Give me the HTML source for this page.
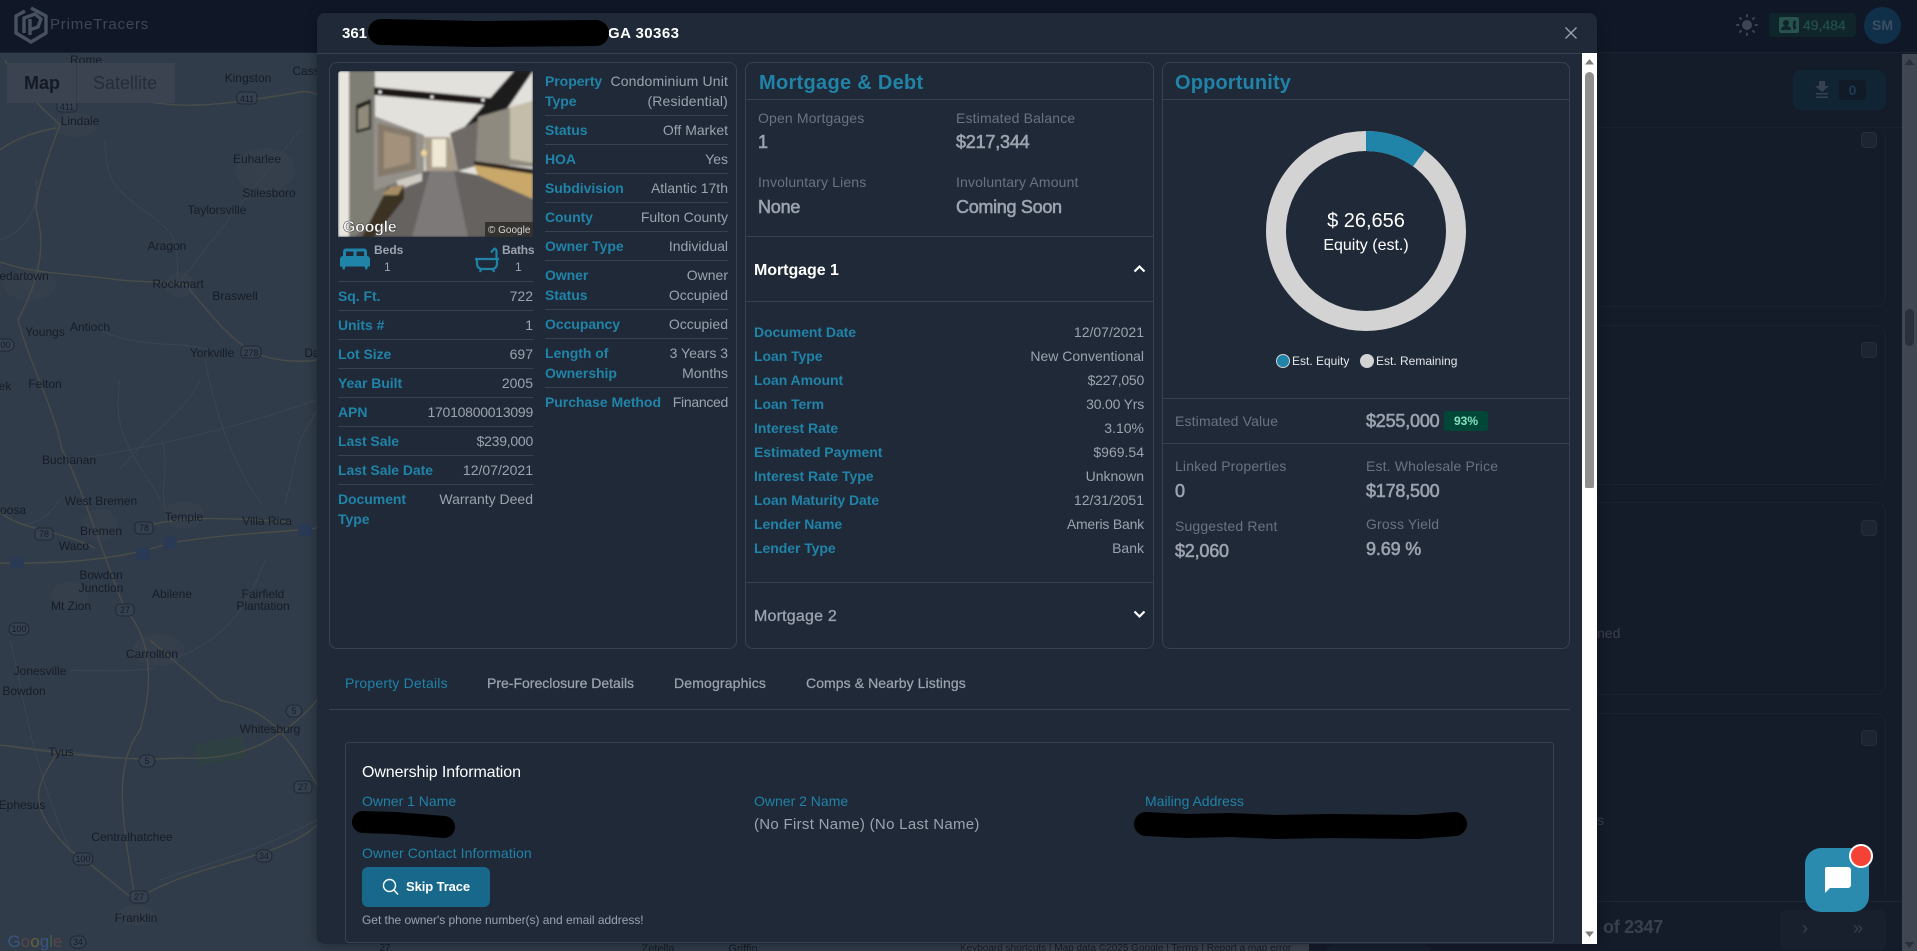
<!DOCTYPE html>
<html lang="en">
<head>
<meta charset="utf-8">
<title>PrimeTracers</title>
<style>
html,body{margin:0;padding:0;width:1917px;height:951px;overflow:hidden;background:#141b29;font-family:"Liberation Sans",Arial,sans-serif}
*{box-sizing:border-box}
.a{position:absolute}
#map{position:absolute;left:0;top:0;width:1309px;height:951px;display:block}
#map text{font:12px "Liberation Sans",Arial,sans-serif;fill:#161c27;text-anchor:middle}
#nav{position:absolute;left:0;top:0;width:1917px;height:53px;background:#101828;border-bottom:1px solid #1b2332}
#right{position:absolute;left:1309px;top:54px;width:593px;height:897px;background:#141b29}
.pc{position:absolute;left:1597px;width:289px;border:1px solid #1a2230;border-left:0;border-radius:0 10px 10px 0}
.cb{position:absolute;left:1861px;width:16px;height:16px;background:#1e2532;border:1px solid #262d3a;border-radius:4px}
#modal{position:absolute;left:317px;top:13px;width:1280px;height:931px;background:#1f2937;border-radius:8px 8px 0 8px;box-shadow:0 0 12px rgba(0,0,0,.35)}
.card{position:absolute;border:1px solid #374151;border-radius:8px;top:49px;height:587px}
.hr{position:absolute;height:1px;background:#374151}
.r{position:absolute;display:flex;justify-content:space-between;font-size:14px;line-height:20px;color:#9ca3af}
.r b{color:#2083a8;font-weight:700;white-space:nowrap;letter-spacing:-.05px}
.r span{text-align:right;white-space:nowrap}
.n{letter-spacing:-.25px}
.t{position:absolute;white-space:nowrap;line-height:20px}
.ttl{font-size:20px;font-weight:700;color:#2083a8;line-height:24px;letter-spacing:.3px}
.lb{font-size:14px;color:#6b7280;letter-spacing:.15px}
.val{font-size:18px;color:#9ca3af;font-weight:400;-webkit-text-stroke:.6px #9ca3af;letter-spacing:-.2px;line-height:24px}
.tab{font-size:14px;color:#9ca3af;-webkit-text-stroke:.25px #9ca3af;letter-spacing:.05px}
.own{font-size:14px;color:#2083a8}
</style>
</head>
<body>

<svg id="map" viewBox="0 0 1309 951">
<rect width="1309" height="951" fill="#303c49"/>
<g fill="#353f4c">
<ellipse cx="30" cy="285" rx="26" ry="16"/><ellipse cx="75" cy="125" rx="22" ry="12"/><ellipse cx="265" cy="170" rx="30" ry="22"/><ellipse cx="180" cy="285" rx="16" ry="12"/>
<ellipse cx="184" cy="515" rx="20" ry="14"/><ellipse cx="100" cy="525" rx="18" ry="16"/><ellipse cx="70" cy="595" rx="18" ry="14"/><ellipse cx="158" cy="650" rx="26" ry="16"/><ellipse cx="136" cy="915" rx="20" ry="10"/>
</g>
<rect x="195" y="740" width="50" height="22" fill="#2f4043" transform="rotate(-10 220 750)"/>
<g fill="none" stroke="#3b4553" stroke-width="1">
<path d="M105 140C105 180 115 190 150 215S175 250 178 284"/>
<path d="M178 284L240 205 300 130"/>
<path d="M205 360C215 410 230 460 262 505"/>
<path d="M70 460C140 450 230 430 317 400"/>
<path d="M285 505L300 440 317 410"/>
<path d="M162 440C170 470 160 480 165 510"/>
<path d="M0 240C30 230 40 200 36 180"/>
<path d="M100 330C140 350 180 340 210 350"/>
<path d="M120 380C110 440 140 460 160 500"/>
<path d="M60 500C30 540 10 520 0 510"/>
<path d="M70 670C130 672 140 670 155 668"/>
<path d="M10 640C25 700 30 760 70 850"/>
<path d="M170 660C230 640 250 600 265 560"/>
<path d="M0 745C60 750 90 755 117 758"/>
<path d="M160 880C220 860 260 850 317 820"/>
<path d="M200 380C180 420 150 430 120 470"/>
</g>
<g fill="none" stroke="#4a4c49" stroke-width="1.4">
<path d="M5 60C20 90 50 115 60 125 50 150 36 190 36 210 48 250 36 285 18 320 30 365 55 410 62 450 75 470 100 545 125 610 150 635 155 680 140 730 110 770 125 830 135 900 120 951"/>
<path d="M0 150C20 135 45 130 56 128"/>
<path d="M120 95C170 110 210 108 300 92 310 90 317 95 317 95"/>
<path d="M0 262C40 275 60 272 120 280 170 284 190 280 190 290 215 320 235 345 260 355 290 365 317 360 317 360"/>
<path d="M0 563C60 564 120 560 170 543 230 533 290 532 317 528"/>
<path d="M0 512C20 530 60 530 95 548M144 528C170 515 230 518 290 522"/>
<path d="M150 640L220 700C260 710 280 720 317 785"/>
<path d="M0 745C50 752 120 762 180 758 220 760 270 755 317 700"/>
<path d="M135 900C200 860 280 860 317 825"/>
<path d="M60 750C30 790 30 810 70 850 100 870 120 890 135 900"/>
</g>
<g>
<text x="86" y="64">Rome</text><text x="248" y="82">Kingston</text><text x="306" y="75">Cass</text><text x="80" y="125">Lindale</text>
<text x="257" y="163">Euharlee</text><text x="269" y="197">Stilesboro</text><text x="217" y="214">Taylorsville</text><text x="167" y="250">Aragon</text>
<text x="24" y="280">edartown</text><text x="178" y="288">Rockmart</text><text x="235" y="300">Braswell</text><text x="45" y="336">Youngs</text>
<text x="90" y="331">Antioch</text><text x="212" y="357">Yorkville</text><text x="312" y="357">Da</text><text x="5" y="390">ek</text><text x="45" y="388">Felton</text>
<text x="69" y="464">Buchanan</text><text x="101" y="505">West Bremen</text><text x="13" y="514">oosa</text><text x="184" y="521">Temple</text><text x="267" y="525">Villa Rica</text>
<text x="101" y="535">Bremen</text><text x="74" y="550">Waco</text><text x="101" y="579">Bowdon</text><text x="101" y="592">Junction</text><text x="172" y="598">Abilene</text>
<text x="263" y="598">Fairfield</text><text x="263" y="610">Plantation</text><text x="71" y="610">Mt Zion</text><text x="152" y="658">Carrollton</text><text x="40" y="675">Jonesville</text>
<text x="24" y="695">Bowdon</text><text x="270" y="733">Whitesburg</text><text x="61" y="756">Tyus</text><text x="22" y="809">Ephesus</text><text x="132" y="841">Centralhatchee</text><text x="136" y="922">Franklin</text>
</g>
<g fill="#364150" stroke="#1f2733" stroke-width="1" font-size="9">
<rect x="237" y="92" width="20" height="12" rx="4"/><rect x="57" y="100" width="20" height="12" rx="4"/><rect x="35" y="528" width="18" height="12" rx="4"/><rect x="135" y="522" width="18" height="12" rx="4"/>
<rect x="116" y="604" width="18" height="12" rx="4"/><rect x="241" y="346" width="20" height="12" rx="4"/><rect x="-8" y="339" width="22" height="12" rx="6"/><rect x="9" y="623" width="20" height="12" rx="6"/>
<rect x="286" y="705" width="16" height="12" rx="6"/><rect x="139" y="755" width="16" height="12" rx="6"/><rect x="294" y="781" width="18" height="12" rx="4"/><rect x="73" y="853" width="20" height="12" rx="6"/>
<rect x="256" y="850" width="16" height="12" rx="6"/><rect x="130" y="891" width="18" height="12" rx="4"/><rect x="70" y="936" width="16" height="12" rx="6"/>
</g>
<g style="font-size:9px">
<text x="247" y="102" style="font-size:9px">411</text><text x="67" y="110" style="font-size:9px">411</text><text x="44" y="537" style="font-size:9px">78</text><text x="144" y="531" style="font-size:9px">78</text>
<text x="125" y="613" style="font-size:9px">27</text><text x="251" y="356" style="font-size:9px">278</text><text x="3" y="348" style="font-size:9px">100</text><text x="19" y="632" style="font-size:9px">100</text>
<text x="294" y="714" style="font-size:9px">5</text><text x="147" y="764" style="font-size:9px">5</text><text x="303" y="790" style="font-size:9px">27</text><text x="83" y="862" style="font-size:9px">100</text>
<text x="264" y="859" style="font-size:9px">34</text><text x="139" y="900" style="font-size:9px">27</text><text x="78" y="945" style="font-size:9px">34</text>
</g>
<g>
<rect x="10" y="557" width="14" height="12" rx="3" fill="#2a3a55"/><rect x="136" y="548" width="14" height="12" rx="3" fill="#2a3a55"/><rect x="163" y="537" width="14" height="12" rx="3" fill="#2a3a55"/><rect x="298" y="524" width="14" height="12" rx="3" fill="#2a3a55"/>
</g>
<text x="35" y="947" style="font-size:17px"><tspan style="fill:#3a5680">G</tspan><tspan style="fill:#5c4448">o</tspan><tspan style="fill:#6a6040">o</tspan><tspan style="fill:#3a5680">g</tspan><tspan style="fill:#3f6048">l</tspan><tspan style="fill:#5c4448">e</tspan></text>
<text x="385" y="951" style="font-size:10px">27</text>
<text x="658" y="952" style="font-size:11px">Zetella</text>
<text x="743" y="952" style="font-size:11px">Griffin</text>
<rect x="960" y="944" width="349" height="7" fill="#3a424f"/>
<text x="960" y="951" style="font-size:10px;text-anchor:start">Keyboard shortcuts    |    Map data ©2025 Google    |    Terms    |    Report a map error</text>
</svg>

<div id="nav">
  <svg class="a" style="left:13px;top:6px" width="36" height="38" viewBox="0 0 36 38" fill="none" stroke="#485160" stroke-width="3.400" stroke-linejoin="round">
    <path d="M18 2 33 10V27L18 36 3 27V10L12 5"/>
    <path d="M11 27V12L22 8 28 13 25 21 16 24"/>
    <path d="M17 13V29"/>
  </svg>
  <div class="t" style="left:50px;top:15px;font-size:15px;color:#3f4754;letter-spacing:.8px;font-weight:400">PrimeTracers</div>

  <svg class="a" style="left:1735px;top:13px" width="24" height="24" viewBox="0 0 24 24" fill="#3d4554" stroke="#3d4554" stroke-width="2" stroke-linecap="round">
    <circle cx="12" cy="12" r="5" stroke="none"/>
    <path d="M12 2v1.500M12 20.500V22M2 12h1.500M20.500 12H22M5 5l1 1M18 18l1 1M5 19l1-1M18 6l1-1"/>
  </svg>
  <div class="a" style="left:1769px;top:13px;width:87px;height:24px;background:#0f2529;border-radius:4px"></div>
  <svg class="a" style="left:1779px;top:17px" width="20" height="16" viewBox="0 0 20 16">
    <rect width="20" height="16" rx="2" fill="#27524e"/>
    <circle cx="7" cy="6" r="3" fill="#0f2529"/><path d="M2 13c0-3 2-4 5-4s5 1 5 4z" fill="#0f2529"/>
    <path d="M15 3c-1.500 3-1.500 7 0 10l2.500-2-1-2v-2l1-2z" fill="#0f2529"/>
  </svg>
  <div class="t" style="left:1803px;top:15px;font-size:14px;color:#234c48;-webkit-text-stroke:.35px #234c48">49,484</div>
  <div class="a" style="left:1864px;top:7px;width:37px;height:37px;border-radius:50%;background:#102f49;color:#3b4d62;font-size:14px;font-weight:700;text-align:center;line-height:37px">SM</div>
</div>

<div id="right"></div>
<div class="hr" style="left:1597px;top:127px;width:305px;background:#1a2230"></div>
<div class="pc" style="top:126px;height:181px;border-top:0"></div>
<div class="pc" style="top:325px;height:160px"></div>
<div class="pc" style="top:502px;height:193px"></div>
<div class="pc" style="top:713px;height:189px;border-bottom:0"></div>
<div class="cb" style="top:132px"></div><div class="cb" style="top:342px"></div><div class="cb" style="top:520px"></div><div class="cb" style="top:730px"></div>
<div class="t" style="left:1597px;top:623px;font-size:14px;color:#3a404b">ned</div>
<div class="t" style="left:1597px;top:810px;font-size:14px;color:#3a404b">s</div>

<div class="a" style="left:1793px;top:70px;width:93px;height:40px;background:#112433;border-radius:8px"></div>
<svg class="a" style="left:1815px;top:81px" width="14" height="18" viewBox="0 0 14 18" fill="#374150"><path d="M4 0h6v5h4L7 11 0 5h4zM1 12h12v1.500H1zM1 15.500h12V17H1z"/></svg>
<div class="a" style="left:1839px;top:80px;width:27px;height:20px;background:#111a27;border-radius:3px;color:#1e3a50;font-size:14px;font-weight:700;text-align:center;line-height:20px">0</div>

<div class="hr" style="left:1597px;top:901px;width:305px;background:#1f2635"></div>
<div class="t" style="left:1603px;top:917px;font-size:18px;font-weight:700;color:#39404d;letter-spacing:-.3px">of 2347</div>
<div class="a" style="left:1780px;top:910px;width:106px;height:40px;background:#18202e;border-radius:6px"></div>
<div class="t" style="left:1802px;top:918px;font-size:18px;color:#39404d">›</div>
<div class="t" style="left:1853px;top:918px;font-size:18px;color:#39404d">»</div>
<div class="a" style="left:1327px;top:944px;width:103px;height:7px;background:#18202e;border-radius:6px 6px 0 0"></div>

<div class="a" style="left:1902px;top:54px;width:15px;height:897px;background:#414752"></div>
<div class="a" style="left:1905px;top:309px;width:9px;height:37px;background:#2a303c;border-radius:5px"></div>
<svg class="a" style="left:1904px;top:58px" width="11" height="8"><path d="M5.500 1 10.500 7H.5z" fill="#2a303c"/></svg>
<svg class="a" style="left:1904px;top:941px" width="11" height="8"><path d="M5.500 7 10.500 1H.5z" fill="#2a303c"/></svg>

<div class="a" style="left:7px;top:63px;width:168px;height:40px;background:#3b4351"></div>
<div class="a" style="left:76px;top:63px;width:1px;height:40px;background:#333a48"></div>
<div class="t" style="left:24px;top:73px;font-size:18px;font-weight:700;color:#141a25">Map</div>
<div class="t" style="left:93px;top:73px;font-size:18px;color:#262d39">Satellite</div>

<div id="modal">
  <!-- offsets: modal left=317, top=13 -->
  <div class="t" style="left:25px;top:11px;font-size:15px;font-weight:700;color:#fff">361</div>
  <div class="t" style="left:291px;top:11px;font-size:15px;font-weight:700;color:#fff;letter-spacing:.45px">GA 30363</div>
  <svg class="a" style="left:0;top:0;width:320px;height:40px;overflow:visible" viewBox="0 0 320 40"><path d="M64 19L160 21 279 20" stroke="#000" stroke-width="26" stroke-linecap="round" fill="none"/></svg>
  <svg class="a" style="left:1248px;top:14px" width="12" height="12" viewBox="0 0 12 12"><path d="M.5.5l11 11M11.500.5l-11 11" stroke="#9ca3af" stroke-width="1.300"/></svg>
  <div class="hr" style="left:0;top:40px;width:1280px"></div>

  <!-- CARD 1 -->
  <div class="card" style="left:12px;width:408px"></div>
  <svg class="a" style="left:21px;top:58px;border-radius:3px 0 0 0" width="195" height="166" viewBox="0 0 195 166">
    <defs><filter id="bl"><feGaussianBlur stdDeviation="1"/></filter></defs>
    <g filter="url(#bl)">
    <rect width="195" height="166" fill="#e3e1db"/>
    <polygon points="0,0 12,0 12,166 0,166" fill="#e9e6df"/>
    <polygon points="11,0 37,0 37,118 86,100 16,166 11,166" fill="#7f7e75"/>
    <polygon points="36,45 86,64 86,100 36,120" fill="#94908a"/>
    <polygon points="40,52 78,62 78,98 40,106" fill="#85796a"/>
    <polygon points="46,60 72,66 72,92 46,98" fill="#a3917c"/>
    <polygon points="36,16 165,28 160,35 36,24" fill="#1a1918"/>
    <polygon points="176,0 195,0 150,66 128,74 123,60" fill="#1f1c1a"/>
    <polygon points="18,34 33,28 33,58 18,62" fill="#1f1d1a"/>
    <polygon points="20,38 31,33 31,56 20,59" fill="#8f8a7a"/>
    <polygon points="86,66 112,66 120,100 88,100" fill="#a89d8a"/>
    <polygon points="94,68 108,68 108,96 94,96" fill="#efe8d4"/>
    <polygon points="112,62 140,50 138,95 120,100" fill="#6f6b66"/>
    <polygon points="140,46 195,30 195,96 138,92" fill="#8f8a80"/>
    <polygon points="172,36 195,30 195,92 172,88" fill="#c4bda9"/>
    <polygon points="136,90 195,98 195,105 136,95" fill="#2b241b"/>
    <polygon points="136,94 195,103 195,128 170,118 140,104" fill="#c9a86b"/>
    <polygon points="16,166 86,100 120,100 140,104 195,128 195,166" fill="#666260"/>
    <polygon points="92,100 116,100 130,166 74,166" fill="#7d7978"/>
    <polygon points="58,110 84,102 84,110 62,118" fill="#cfcac2"/>
    <polygon points="50,116 66,114 66,128 36,166 24,166" fill="#3a3122"/>
    <polygon points="52,116 66,114 60,124 44,124" fill="#a68d68"/>
    <circle cx="86" cy="82" r="3" fill="#f3d79a"/>
    <circle cx="42" cy="21" r="1.500" fill="#fff"/><circle cx="94" cy="26" r="1.500" fill="#fff"/><circle cx="145" cy="29" r="1.500" fill="#fff"/>
    </g>
    <rect x="147" y="151" width="48" height="15" fill="#2d2b28" opacity=".85"/>
    <text x="150" y="162" font-family="Liberation Sans" font-size="10" fill="#d5d5d5">© Google</text>
    <text x="5" y="161" font-family="Liberation Sans" font-weight="700" font-size="16" fill="#fff" stroke="#333" stroke-width=".5" letter-spacing="-.3">Google</text>
  </svg>
  <svg class="a" style="left:20px;top:227.500px" width="36" height="36" viewBox="0 0 24 24"><path fill="#2083a8" d="M20 10V7C20 5.900 19.100 5 18 5H6C4.900 5 4 5.900 4 7V10C2.900 10 2 10.900 2 12V17H3.330L4 19H5L5.670 17H18.330L19 19H20L20.670 17H22V12C22 10.900 21.100 10 20 10M11 10H6V7H11V10M18 10H13V7H18V10Z"/></svg>
  <div class="t" style="left:57px;top:227px;font-size:12px;font-weight:700;color:#9ca3af">Beds</div>
  <div class="t" style="left:67px;top:244px;font-size:12px;color:#9ca3af">1</div>
  <svg class="a" style="left:157px;top:234px" width="26" height="26" viewBox="0 0 26 26" fill="none" stroke="#2083a8" stroke-width="2.200"><path d="M1 12H25"/><path d="M3 12V17a5 5 0 0 0 5 5H18a5 5 0 0 0 5-5V12"/><path d="M7 22L6 25M19 22L20 25"/><path d="M22.500 12V4a2.500 2.500 0 0 0-2.500-2.500"/><path d="M17 5.500L20.500 1.500"/></svg>
  <div class="t" style="left:185px;top:227px;font-size:12px;font-weight:700;color:#9ca3af;letter-spacing:-.2px">Baths</div>
  <div class="t" style="left:198px;top:244px;font-size:12px;color:#9ca3af">1</div>

  <div class="hr" style="left:21px;top:268px;width:195px"></div>
  <div class="r" style="left:21px;top:273px;width:195px"><b>Sq. Ft.</b><span>722</span></div>
  <div class="hr" style="left:21px;top:297px;width:195px"></div>
  <div class="r" style="left:21px;top:302px;width:195px"><b>Units #</b><span>1</span></div>
  <div class="hr" style="left:21px;top:326px;width:195px"></div>
  <div class="r" style="left:21px;top:331px;width:195px"><b>Lot Size</b><span>697</span></div>
  <div class="hr" style="left:21px;top:355px;width:195px"></div>
  <div class="r" style="left:21px;top:360px;width:195px"><b>Year Built</b><span>2005</span></div>
  <div class="hr" style="left:21px;top:384px;width:195px"></div>
  <div class="r" style="left:21px;top:389px;width:195px"><b>APN</b><span class="n">17010800013099</span></div>
  <div class="hr" style="left:21px;top:413px;width:195px"></div>
  <div class="r" style="left:21px;top:418px;width:195px"><b>Last Sale</b><span class="n">$239,000</span></div>
  <div class="hr" style="left:21px;top:442px;width:195px"></div>
  <div class="r" style="left:21px;top:447px;width:195px"><b>Last Sale Date</b><span>12/07/2021</span></div>
  <div class="hr" style="left:21px;top:471px;width:195px"></div>
  <div class="r" style="left:21px;top:476px;width:195px"><b>Document<br>Type</b><span>Warranty Deed</span></div>

  <div class="r" style="left:228px;top:58px;width:183px"><b>Property<br>Type</b><span style="letter-spacing:.15px">Condominium Unit<br>(Residential)</span></div>
  <div class="hr" style="left:228px;top:102px;width:183px"></div>
  <div class="r" style="left:228px;top:107px;width:183px"><b>Status</b><span>Off Market</span></div>
  <div class="hr" style="left:228px;top:131px;width:183px"></div>
  <div class="r" style="left:228px;top:136px;width:183px"><b>HOA</b><span>Yes</span></div>
  <div class="hr" style="left:228px;top:160px;width:183px"></div>
  <div class="r" style="left:228px;top:165px;width:183px"><b>Subdivision</b><span>Atlantic 17th</span></div>
  <div class="hr" style="left:228px;top:189px;width:183px"></div>
  <div class="r" style="left:228px;top:194px;width:183px"><b>County</b><span>Fulton County</span></div>
  <div class="hr" style="left:228px;top:218px;width:183px"></div>
  <div class="r" style="left:228px;top:223px;width:183px"><b>Owner Type</b><span>Individual</span></div>
  <div class="hr" style="left:228px;top:247px;width:183px"></div>
  <div class="r" style="left:228px;top:252px;width:183px"><b>Owner<br>Status</b><span>Owner<br>Occupied</span></div>
  <div class="hr" style="left:228px;top:296px;width:183px"></div>
  <div class="r" style="left:228px;top:301px;width:183px"><b>Occupancy</b><span>Occupied</span></div>
  <div class="hr" style="left:228px;top:325px;width:183px"></div>
  <div class="r" style="left:228px;top:330px;width:183px"><b>Length of<br>Ownership</b><span>3 Years 3<br>Months</span></div>
  <div class="hr" style="left:228px;top:374px;width:183px"></div>
  <div class="r" style="left:228px;top:379px;width:183px"><b>Purchase Method</b><span style="letter-spacing:-.3px">Financed</span></div>

  <!-- CARD 2 -->
  <div class="card" style="left:428px;width:409px"></div>
  <div class="t ttl" style="left:442px;top:58px">Mortgage &amp; Debt</div>
  <div class="hr" style="left:428px;top:86px;width:409px"></div>
  <div class="t lb" style="left:441px;top:95px">Open Mortgages</div>
  <div class="t val" style="left:441px;top:117px">1</div>
  <div class="t lb" style="left:639px;top:95px">Estimated Balance</div>
  <div class="t val" style="left:639px;top:117px">$217,344</div>
  <div class="t lb" style="left:441px;top:159px">Involuntary Liens</div>
  <div class="t val" style="left:441px;top:182px">None</div>
  <div class="t lb" style="left:639px;top:159px">Involuntary Amount</div>
  <div class="t val" style="left:639px;top:182px;letter-spacing:-.3px">Coming Soon</div>
  <div class="hr" style="left:428px;top:223px;width:409px"></div>
  <div class="t" style="left:437px;top:248px;font-size:16px;font-weight:700;color:#fff;letter-spacing:-.05px">Mortgage 1</div>
  <svg class="a" style="left:816px;top:251px" width="13" height="9" viewBox="0 0 13 9"><path d="M1.500 7.500 6.500 2.500l5 5" fill="none" stroke="#fff" stroke-width="2.200"/></svg>
  <div class="hr" style="left:428px;top:288px;width:409px"></div>
  <div class="r" style="left:437px;top:309px;width:390px"><b>Document Date</b><span>12/07/2021</span></div>
  <div class="r" style="left:437px;top:333px;width:390px"><b>Loan Type</b><span>New Conventional</span></div>
  <div class="r" style="left:437px;top:357px;width:390px"><b>Loan Amount</b><span class="n">$227,050</span></div>
  <div class="r" style="left:437px;top:381px;width:390px"><b>Loan Term</b><span style="letter-spacing:-.2px">30.00 Yrs</span></div>
  <div class="r" style="left:437px;top:405px;width:390px"><b>Interest Rate</b><span>3.10%</span></div>
  <div class="r" style="left:437px;top:429px;width:390px"><b>Estimated Payment</b><span>$969.54</span></div>
  <div class="r" style="left:437px;top:453px;width:390px"><b>Interest Rate Type</b><span>Unknown</span></div>
  <div class="r" style="left:437px;top:477px;width:390px"><b>Loan Maturity Date</b><span>12/31/2051</span></div>
  <div class="r" style="left:437px;top:501px;width:390px"><b>Lender Name</b><span style="letter-spacing:-.2px">Ameris Bank</span></div>
  <div class="r" style="left:437px;top:525px;width:390px"><b>Lender Type</b><span>Bank</span></div>
  <div class="hr" style="left:428px;top:569px;width:409px"></div>
  <div class="t" style="left:437px;top:594px;font-size:16px;color:#9ca3af;-webkit-text-stroke:.3px #9ca3af;letter-spacing:.2px">Mortgage 2</div>
  <svg class="a" style="left:816px;top:597px" width="13" height="9" viewBox="0 0 13 9"><path d="M1.500 1.500 6.500 6.500l5-5" fill="none" stroke="#fff" stroke-width="2.200"/></svg>

  <!-- CARD 3 -->
  <div class="card" style="left:845px;width:408px"></div>
  <div class="t ttl" style="left:858px;top:58px;letter-spacing:.15px">Opportunity</div>
  <div class="hr" style="left:845px;top:86px;width:408px"></div>
  <svg class="a" style="left:949px;top:118px" width="200" height="200" viewBox="-100 -100 200 200">
    <circle r="90" fill="none" stroke="#d3d3d3" stroke-width="20"/>
    <path d="M0-100A100 100 0 0 1 59-81L47-64.500A80 80 0 0 0 0-80Z" fill="#2083a8"/>
    <text y="-4" text-anchor="middle" font-family="Liberation Sans" font-size="20" fill="#fff">$ 26,656</text>
    <text y="19" text-anchor="middle" font-family="Liberation Sans" font-size="16" fill="#fff">Equity (est.)</text>
  </svg>
  <div class="a" style="left:959px;top:341px;width:14px;height:14px;border-radius:50%;background:#2083a8;border:1px solid #d3d3d3"></div>
  <div class="t" style="left:975px;top:338px;font-size:12px;color:#e5e7eb">Est. Equity</div>
  <div class="a" style="left:1043px;top:341px;width:14px;height:14px;border-radius:50%;background:#d3d3d3"></div>
  <div class="t" style="left:1059px;top:338px;font-size:12px;color:#e5e7eb">Est. Remaining</div>
  <div class="hr" style="left:845px;top:385px;width:408px"></div>
  <div class="t lb" style="left:858px;top:398px">Estimated Value</div>
  <div class="t val" style="left:1049px;top:396px">$255,000</div>
  <div class="a" style="left:1127px;top:398px;width:44px;height:20px;background:#014737;border-radius:3px;color:#84e1bc;font-size:12px;font-weight:700;text-align:center;line-height:20px">93%</div>
  <div class="hr" style="left:845px;top:430px;width:408px"></div>
  <div class="t lb" style="left:858px;top:443px">Linked Properties</div>
  <div class="t val" style="left:858px;top:466px">0</div>
  <div class="t lb" style="left:1049px;top:443px">Est. Wholesale Price</div>
  <div class="t val" style="left:1049px;top:466px">$178,500</div>
  <div class="t lb" style="left:858px;top:503px">Suggested Rent</div>
  <div class="t val" style="left:858px;top:526px">$2,060</div>
  <div class="t lb" style="left:1049px;top:501px">Gross Yield</div>
  <div class="t val" style="left:1049px;top:524px;letter-spacing:-.15px">9.69 %</div>

  <!-- TABS -->
  <div class="t tab" style="left:28px;top:660px;color:#2083a8;-webkit-text-stroke:0;letter-spacing:.2px">Property Details</div>
  <div class="t tab" style="left:170px;top:660px;letter-spacing:0">Pre-Foreclosure Details</div>
  <div class="t tab" style="left:357px;top:660px;letter-spacing:.15px">Demographics</div>
  <div class="t tab" style="left:489px;top:660px;letter-spacing:.08px">Comps &amp; Nearby Listings</div>
  <div class="hr" style="left:12px;top:696px;width:1241px"></div>

  <!-- OWNERSHIP -->
  <div class="a" style="left:28px;top:729px;width:1209px;height:201px;border:1px solid #374151;border-radius:4px"></div>
  <div class="t" style="left:45px;top:750px;font-size:16px;color:#fff;letter-spacing:-.1px">Ownership Information</div>
  <div class="t own" style="left:45px;top:778px">Owner 1 Name</div>
  <svg class="a" style="left:30px;top:790px;overflow:visible" width="120" height="40"><path d="M16 19L48 20 97 24" stroke="#000" stroke-width="22" stroke-linecap="round" fill="none"/></svg>
  <div class="t own" style="left:437px;top:778px">Owner 2 Name</div>
  <div class="t" style="left:437px;top:802px;font-size:15px;color:#9ca3af;letter-spacing:.3px">(No First Name) (No Last Name)</div>
  <div class="t own" style="left:828px;top:778px">Mailing Address</div>
  <svg class="a" style="left:810px;top:790px;overflow:visible" width="350" height="40"><path d="M19 21L60 23 103 22 150 24 203 23 290 24 328 21" stroke="#000" stroke-width="24" stroke-linecap="round" stroke-linejoin="round" fill="none"/></svg>
  <div class="t own" style="left:45px;top:830px;letter-spacing:.1px">Owner Contact Information</div>
  <div class="a" style="left:45px;top:854px;width:128px;height:40px;background:#17688b;border-radius:6px"></div>
  <svg class="a" style="left:65px;top:865px" width="17" height="18" viewBox="0 0 17 18" fill="none" stroke="#fff" stroke-width="1.400"><circle cx="7.500" cy="7.500" r="6"/><path d="M12 12l4 4.500"/></svg>
  <div class="t" style="left:89px;top:864px;font-size:13px;font-weight:700;color:#fff;letter-spacing:-.1px">Skip Trace</div>
  <div class="t" style="left:45px;top:897px;font-size:12px;color:#9ca3af;letter-spacing:-.03px">Get the owner's phone number(s) and email address!</div>

  <!-- MODAL SCROLLBAR -->
  <div class="a" style="left:1265px;top:40px;width:15px;height:891px;background:#fff"></div>
  <div class="a" style="left:1268px;top:59px;width:9px;height:416px;background:#8f8f8f;border-radius:5px 5px 2px 2px"></div>
  <svg class="a" style="left:1267px;top:45px" width="11" height="8"><path d="M5.500 1 10 6.500H1z" fill="#7f7f7f"/></svg>
  <svg class="a" style="left:1267px;top:917px" width="11" height="8"><path d="M5.500 7 10 1.500H1z" fill="#7f7f7f"/></svg>
</div>

<!-- CHAT -->
<div class="a" style="left:1805px;top:848px;width:64px;height:64px;background:#2a8bae;border-radius:16px"></div>
<svg class="a" style="left:1823px;top:866px" width="29" height="28" viewBox="0 0 29 28"><path d="M4 1H25a3 3 0 0 1 3 3V19a3 3 0 0 1-3 3H7L2 27V3a2 2 0 0 1 2-2Z" fill="#fff"/></svg>
<div class="a" style="left:1849px;top:844px;width:24px;height:24px;border-radius:50%;background:#f44336;border:2px solid #fff"></div>

</body>
</html>
